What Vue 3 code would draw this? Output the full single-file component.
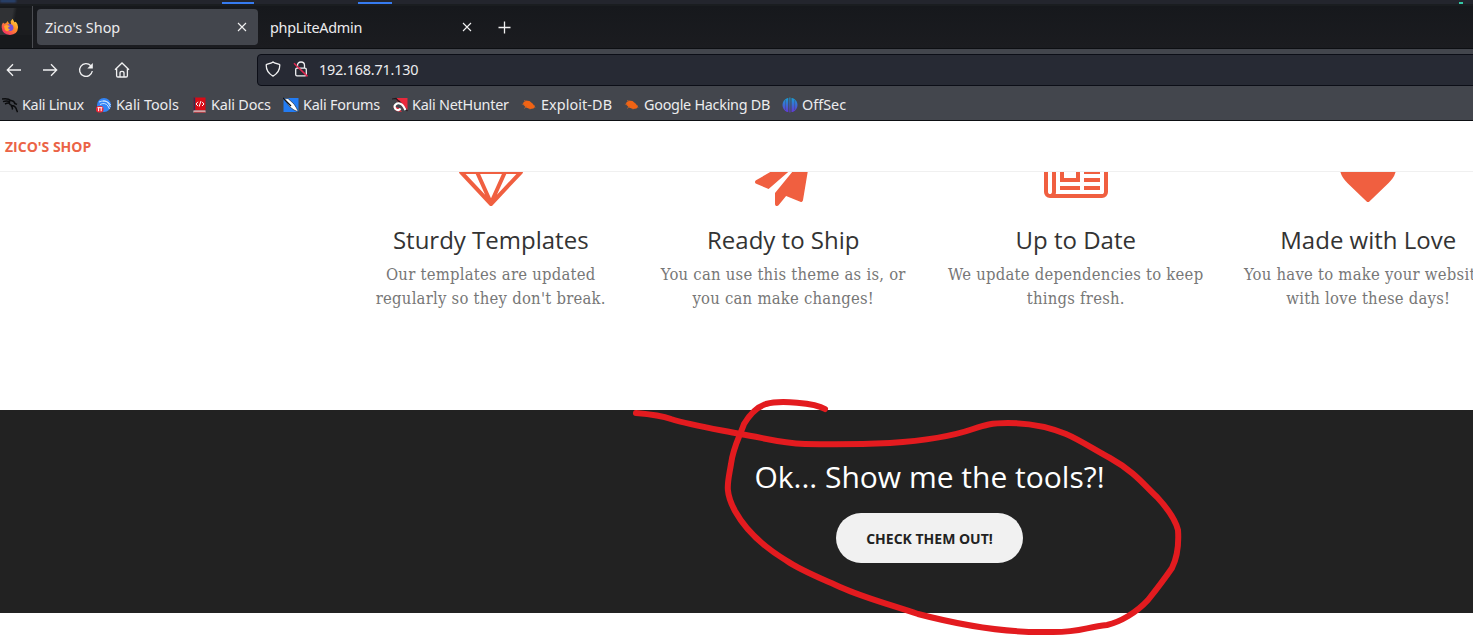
<script setup>
const bookmarks = [
  { label: 'Kali Linux', icon: 'dragon', w: 62, gap: 12, track: -0.3 },
  { label: 'Kali Tools', icon: 'tools', w: 63, gap: 12, track: -0.04 },
  { label: 'Kali Docs', icon: 'docs', w: 60, gap: 12, track: -0.16 },
  { label: 'Kali Forums', icon: 'forums', w: 77, gap: 12, track: -0.23 },
  { label: 'Kali NetHunter', icon: 'hunter', w: 97, gap: 12, track: -0.24 },
  { label: 'Exploit-DB', icon: 'bug', w: 71, gap: 12, track: 0.08 },
  { label: 'Google Hacking DB', icon: 'bug', w: 126, gap: 12, track: -0.27 },
  { label: 'OffSec', icon: 'offsec', w: 44, gap: 0, track: 0 },
]

const services = [
  {
    title: 'Sturdy Templates',
    lines: ['Our templates are updated', "regularly so they don't break."],
    width: 64,
    box: '0 0 2048 1792',
    path: 'M1651 154l384 512q14 18 13 41.5t-17 40.5l-960 1024q-18 20-47 20t-47-20L17 748q-16-17-17-40.5T13 666L397 154q18-26 51-26h1152q33 0 51 26zM212 768l623 665-300-665zM1024 1540l349-772H675zM581 256L293 640h346l204-384zM1213 1433l623-665h-323zM721 640h606l-204-384H925zM1409 640h346l-288-384h-262z',
  },
  {
    title: 'Ready to Ship',
    lines: ['You can use this theme as is, or', 'you can make changes!'],
    width: 56,
    box: '0 0 1792 1792',
    path: 'M1764 11q33 24 27 64l-256 1536q-5 29-32 45-14 8-31 8-11 0-24-5l-453-185-242 295q-18 23-49 23-13 0-22-4-19-7-30.5-23.5t-11.5-36.5v-349l864-1059-1069 925-395-162q-37-14-40-55-2-40 32-59l1664-960q15-9 32-9 20 0 36 11z',
  },
  {
    title: 'Up to Date',
    lines: ['We update dependencies to keep', 'things fresh.'],
    width: 64,
    box: '0 0 2048 1792',
    path: 'M1024 512h-384v384h384v-384zm128 640v128h-640v-128h640zm0-768v640h-640v-640h640zm640 768v128h-512v-128h512zm0-256v128h-512v-128h512zm0-256v128h-512v-128h512zm0-256v128h-512v-128h512zm-1536 960v-960h-128v960q0 26 19 45t45 19 45-19 19-45zm1664 0v-1088h-1536v1088q0 33-11 64h1483q26 0 45-19t19-45zm128-1216v1216q0 80-56 136t-136 56h-1664q-80 0-136-56t-56-136v-1088h256v-128h1792z',
  },
  {
    title: 'Made with Love',
    lines: ['You have to make your websites', 'with love these days!'],
    width: 56,
    box: '0 0 1792 1792',
    path: 'M896 1664q-26 0-44-18l-624-602q-10-8-27.5-26t-55.5-65.5-68-97.5-53.5-121-23.5-138q0-220 127-344t351-124q62 0 126.5 21.5t120 58 95.5 68.5 76 68q36-36 76-68t95.5-68.5 120-58 126.5-21.5q224 0 351 124t127 344q0 221-229 450l-623 600q-18 18-44 18z',
  },
]
</script>

<template>
  <div class="screen">
    <div class="panel">
      <i class="glow"></i><i class="run run-a"></i><i class="run run-b"></i><i class="led"></i>
    </div>

    <div class="tabs">
      <div class="pinned">
        <svg width="18" height="18" viewBox="0 0 18 18">
          <defs>
            <linearGradient id="fox" x1="1" y1="0" x2="0.2" y2="1">
              <stop offset="0" stop-color="#ffe14a" />
              <stop offset="0.45" stop-color="#ff9326" />
              <stop offset="1" stop-color="#f5286b" />
            </linearGradient>
          </defs>
          <path class="flame" d="M1.800 7L3 4.500l1.600 1.300 1.800-1L7.500 3l1.800 2.800 1.700.2-.4-2.500L12.500.8l2 3.400 1.300-.4q2.400 2.500 2.200 6-.5 6.800-8 7.200Q2.300 16.600 1.700 9.600z" />
          <path class="globe" d="M7 7.200q3-2.400 5.800.2 1.700 3-.7 5-3 1.500-5-.8z" />
          <path class="snout" d="M4 8q2.500-1.500 4.600-.6l1.600.6-2 1.300q-.4 1.800 1.800 2.300Q7 14.500 5 12z" />
        </svg>
      </div>
      <div class="tab active">
        <span>Zico's Shop</span>
        <svg width="10" height="10" viewBox="0 0 10 10"><path d="M1 1l8 8M9 1L1 9" /></svg>
      </div>
      <div class="tab second">
        <span>phpLiteAdmin</span>
        <svg width="10" height="10" viewBox="0 0 10 10"><path d="M1 1l8 8M9 1L1 9" /></svg>
      </div>
      <svg class="plus" width="13" height="13" viewBox="0 0 13 13"><path d="M6.500 .5v12M.5 6.500h12" /></svg>
    </div>

    <div class="toolbar">
      <div class="nav-buttons">
        <svg width="16" height="16" viewBox="0 0 16 16"><path d="M15 8H1.500M7 2.200L1.300 8 7 13.800" /></svg>
        <svg width="16" height="16" viewBox="0 0 16 16"><path d="M1 8h13.500M9 2.200L14.700 8 9 13.800" /></svg>
        <svg width="16" height="16" viewBox="0 0 16 16">
          <path d="M14.300 9A6.400 6.400 0 1 1 12.800 3.800" /><path class="arrowhead" d="M14.800 1v5.500H9.300z" />
        </svg>
        <svg width="16" height="16" viewBox="0 0 16 16">
          <path d="M1 7.800L8 1l7 6.800M2.600 6.500v7.200q0 1.300 1.300 1.300h8.200q1.300 0 1.300-1.300V6.500M6 15v-4q0-1.700 2-1.700t2 1.700v4" />
        </svg>
      </div>
      <div class="address">
        <svg width="16" height="16" viewBox="0 0 16 16">
          <path d="M8 .9q1 .9 6.300 2.400.5.2.5.800 0 7.500-6.800 11Q1.200 11.600 1.200 4.100q0-.6.500-.8Q7 1.800 8 .9z" />
        </svg>
        <svg class="lock" width="16" height="16" viewBox="0 0 16 16">
          <path d="M4.500 7V4.500Q4.500 1 8 1t3.500 3.500V7M4 7.200h8q1.300 0 1.300 1.300v5q0 1.300-1.300 1.300H4q-1.300 0-1.300-1.300v-5Q2.700 7.200 4 7.200z" />
          <path class="slash" d="M1 2.200l13.500 13.200" />
        </svg>
        <span>192.168.71.130</span>
      </div>
    </div>

    <div class="bookmarks">
      <div v-for="b in bookmarks" :key="b.label" class="bookmark" :style="{ marginRight: b.gap + 'px' }">
        <svg width="16" height="16" viewBox="0 0 16 16">
          <g v-if="b.icon === 'dragon'" fill="none" stroke="#0b0c0e" stroke-width="1.500">
            <path d="M0 2q6-1 9 1.500 2.500.2 4 2.500M1 4.600q4-1.200 7 .2M3 7q3-1.600 5-.5M8 3.500q-2 4 2 5 4 .7 4.600 4.500l1 2.200M9 8.500q2 2 1.200 4M12 6.200l3 1.200" />
          </g>
          <g v-else-if="b.icon === 'tools'">
            <circle cx="8" cy="8" r="7" fill="#3284f6" />
            <path d="M3 5q6-2.500 9 1l2.500 4M4 7.500q5-2.600 8 1.500l1.500 3M7 4q5-.5 7.500 4" fill="none" stroke="#d5eaff" stroke-width=".9" />
            <rect x="0" y="9" width="7.500" height="6.500" rx="3" fill="#ee2635" />
            <path d="M1.500 10.700h4.800M2.600 10.700v3.500M5.200 10.700v3.500" stroke="#fff" fill="none" />
          </g>
          <g v-else-if="b.icon === 'docs'">
            <path d="M2.500.500h12v13h-12z" fill="#d90b16" /><path d="M2.500.500H4.200v13H2.500z" fill="#293354" />
            <path d="M2.500 13.500h12v2h-12z" fill="#e9dddd" /><path d="M3 15.200h11.500" stroke="#b3222a" />
            <path d="M7 4.800L5 7l2 2M11 4.800L13 7l-2 2M9.800 4.200L8.200 9.600" stroke="#fff" fill="none" />
          </g>
          <g v-else-if="b.icon === 'forums'">
            <path d="M.5 1h15v14H.5z" fill="#237cf3" />
            <path d="M1 2l4-.5L11 7l2.500 4 2 4-4.500-2-4-3z" fill="#fff" stroke="#151b23" stroke-width=".6" />
            <path d="M0 1l8 8" stroke="#111" stroke-width="1.200" />
          </g>
          <g v-else-if="b.icon === 'hunter'">
            <path d="M4 1h11.500v13L5 4z" fill="#e8293c" />
            <path d="M1 9l3 5 6 1-3-4z" fill="#e8293c" />
            <path d="M0 2l4-.5 4 4M7 4l8.500 10" stroke="#20191e" stroke-width="1.200" fill="none" />
            <path d="M13.500 13Q10 5 5 6.500 1 8.500 3.500 12q3 2.500 5-.5" fill="none" stroke="#fff" stroke-width="2.200" />
          </g>
          <g v-else-if="b.icon === 'bug'" fill="#f06314">
            <path d="M2 6l2.500-2.500 4 .4L11.500 6.500l2.500 3-1.500 2L9 12 5 10.500 2.500 8z" />
            <path d="M.8 7l3 1M3 11.500l3-2M8 11l1 1.500M13 8l1 3M3 3l2 2" stroke="#bd642c" stroke-width=".7" />
          </g>
          <g v-else>
            <defs>
              <linearGradient id="off" x1="0" y1="0" x2="0" y2="1">
                <stop offset="0" stop-color="#16a0d4" /><stop offset="1" stop-color="#6335d4" />
              </linearGradient>
            </defs>
            <path d="M6.300 1v14H5Q.5 12.500.5 8T5 1.200zM9.500 1v14h1.300Q15.500 12.500 15.500 8T11 1.200zM7.400.5h1v15h-1z" fill="url(#off)" />
            <path d="M3.500 3v10M12.600 3v10" stroke="#43464d" stroke-width=".4" />
          </g>
        </svg>
        <span :style="{ width: b.w + 'px', letterSpacing: b.track + 'px' }">{{ b.label }}</span>
      </div>
    </div>

    <nav class="site-nav">ZICO'S SHOP</nav>

    <section class="services">
      <article v-for="s in services" :key="s.title">
        <svg :width="s.width" height="56" :viewBox="s.box"><path :d="s.path" fill-rule="evenodd" /></svg>
        <h3>{{ s.title }}</h3>
        <p><span v-for="l in s.lines" :key="l">{{ l }}</span></p>
      </article>
    </section>

    <section class="cta">
      <h2>Ok... Show me the tools?!</h2>
      <a>CHECK THEM OUT!</a>
    </section>

    <svg class="scribble" width="1473" height="636" viewBox="0 0 1473 636">
      <path d="M636 413C648 414 660 415 671 419C690 425 715 429 740 434C765 438 780 443 805 444C850 445 870 444 890 443C920 441 950 437 973 429C985 425 991 423 1008 423C1030 423 1049 427 1066 434C1080 440 1095 450 1110 458C1135 472 1144 485 1157 497C1169 510 1176 522 1178 530C1179 545 1177 558 1172 568C1163 581 1156 590 1148 600C1136 613 1120 622 1107 625C1085 627 1080 633 1048 632C1002 633 960 625 918 614C888 604 862 597 840 587C820 578 800 570 787 561C762 546 745 529 735 511C724 490 728 483 731 464C733 448 739 438 744 424C750 414 757 407 766 404C780 400 815 403 825 409" />
    </svg>
  </div>
</template>

<style>
body { margin: 0; overflow: hidden; }
</style>

<style scoped>
.screen { position: relative; width: 1473px; height: 636px; overflow: hidden; background: #fff; display: flex; flex-direction: column; }
.panel { height: 6px; flex: none; position: relative; background: linear-gradient(#23252d 4px, #1a1d20 4px); }
.panel i { position: absolute; }
.glow { left: 0; top: 0; width: 16px; height: 2px; background: #2b508f; filter: blur(1px); }
.run { top: 2px; height: 2px; background: #367bf0; }
.run-a { left: 222px; width: 32px; }
.run-b { left: 358px; width: 34px; }
.led { left: 1459px; top: 2px; width: 4px; height: 2px; background: #35c8a5; }
.tabs, .toolbar, .bookmarks { color: #ececee; font-family: "Noto Sans", sans-serif; font-size: 14.4px; white-space: nowrap; }
.tabs { height: 42px; flex: none; display: flex; align-items: center; background: linear-gradient(#16181c, #1b1c20); border-bottom: 1px solid #0d0f13; }
.pinned { width: 32px; height: 42px; border-right: 1px solid #4b4d52; margin-right: 4px; background: #17191c linear-gradient(100deg, #303235 0 13px, #1a1c1f 17px) 0 2px / 32px 27px no-repeat; display: flex; align-items: center; }
.tab { box-sizing: border-box; width: 221px; height: 36px; padding: 0 11px 0 8px; margin-right: 4px; display: flex; align-items: center; justify-content: space-between; border-radius: 4px; }
.second { letter-spacing: -0.27px; }
.active { background: #43464d; }
.tab path, .plus path, .toolbar path { stroke: #f1f1f2; stroke-width: 1.3; fill: none; }
.tab path { stroke-width: 1.1; }
.pinned .flame { fill: url(#fox); }
.pinned .globe { fill: #7350d8; }
.pinned .snout { fill: #ffa62d; }
.plus { margin-left: 11px; }
.toolbar { height: 40px; flex: none; display: flex; align-items: center; background: #43464d; }
.toolbar .arrowhead { fill: #f1f1f2; stroke: none; }
.toolbar .slash { stroke: #e22850; stroke-width: 1.5; }
.nav-buttons { width: 251px; padding-left: 6px; padding-top: 1px; display: flex; gap: 20px; }
.address { flex: 1; box-sizing: border-box; height: 32px; margin-top: 1px; margin-right: -10px; padding: 0 0 1px 7px; border: 1px solid #0c0e17; border-radius: 4px 0 0 4px; background: #272a34; display: flex; align-items: center; }
.address span { letter-spacing: -0.2px; padding-top: 1px; }
.lock { margin: 0 10px 0 12px; }
.bookmarks { height: 31px; flex: none; display: flex; align-items: center; background: #43464d; border-bottom: 1px solid #0d0f13; padding-left: 2px; }
.bookmark { display: flex; align-items: center; flex: none; gap: 4px; }
.site-nav { z-index: 1; height: 50px; flex: none; background: #fff; border-bottom: 1px solid #f0f0f0; padding-left: 5px; color: #eb6346; font: 700 14px/52px "Open Sans", sans-serif; }
.services { height: 260px; flex: none; margin-top: -22px; margin-left: 344.5px; display: grid; grid-template-columns: repeat(4, 292.5px); }
article { text-align: center; }
article svg { display: block; margin: 0 auto; fill: #f05f40; }
h3 { margin: 20px 0 9px; font: 400 24px/27px "Open Sans", sans-serif; color: #333; }
p { margin: 0; padding-top: 1px; font: 16.5px/24px "DejaVu Serif Condensed", "DejaVu Serif", serif; font-stretch: condensed; letter-spacing: 0.24px; color: #777; white-space: nowrap; }
p span { display: block; }
.cta { height: 203px; flex: none; box-sizing: border-box; padding: 50px 0 0 386px; background: #222; display: flex; flex-direction: column; align-items: center; }
h2 { margin: 0 0 20px; color: #fff; font: 400 30px/33px "Open Sans", sans-serif; }
.cta a { width: 187px; height: 50px; border-radius: 25px; background: #f1f1f1; color: #222; text-align: center; font: 700 14px/51px "Open Sans", sans-serif; }
.scribble { position: absolute; left: 0; top: 0; z-index: 2; fill: none; stroke: #e31b1f; stroke-width: 6; stroke-linecap: round; stroke-linejoin: round; pointer-events: none; }
</style>
